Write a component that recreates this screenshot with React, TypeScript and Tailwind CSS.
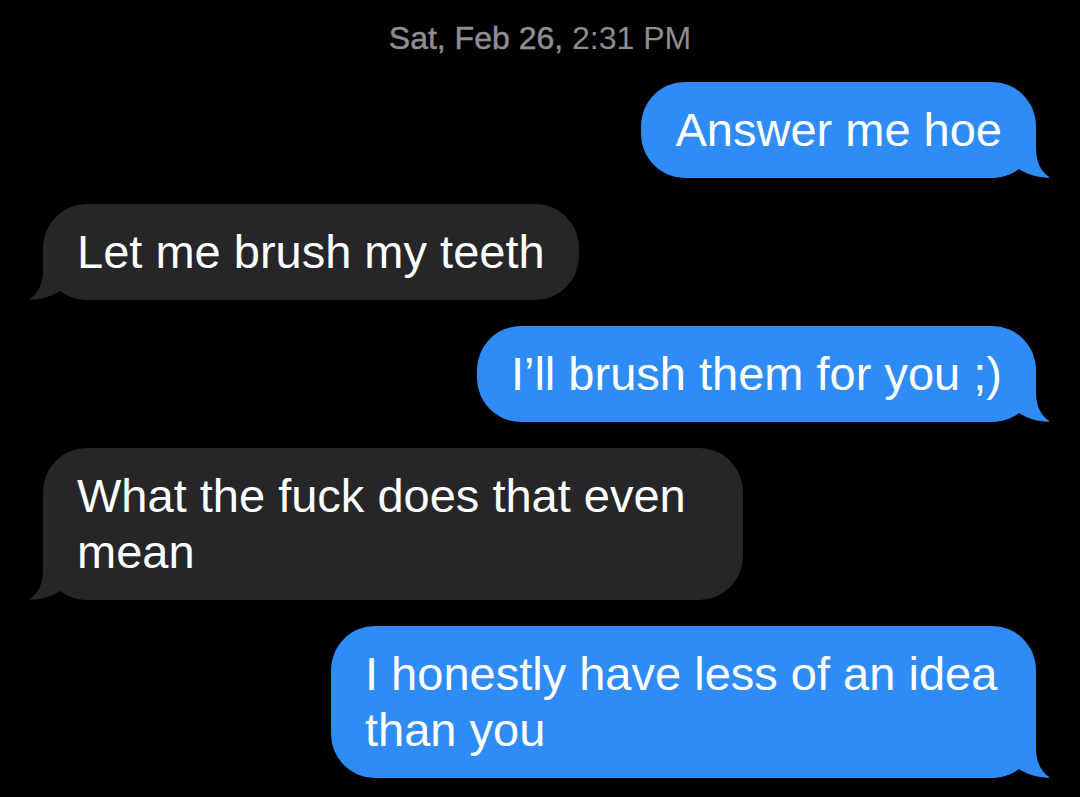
import React from 'react';

type Side = 'left' | 'right';

type Message = {
  side: Side;
  lines: string[];
  width?: string;
};

const messages: Message[] = [
  { side: 'right', lines: ['Answer me hoe'] },
  { side: 'left', lines: ['Let me brush my teeth'] },
  { side: 'right', lines: ['I\u2019ll brush them for you ;)'] },
  { side: 'left', lines: ['What the fuck does that even', 'mean'], width: 'w-[700px]' },
  { side: 'right', lines: ['I honestly have less of an idea', 'than you'], width: 'w-[705px]' },
];

function Tail({ side, color }: { side: Side; color: string }) {
  return (
    <svg
      width="64"
      height="48"
      viewBox="0 0 64 48"
      className={
        side === 'right'
          ? 'absolute bottom-0 right-[-16px]'
          : 'absolute bottom-0 left-[-16px] -scale-x-100'
      }
    >
      <path
        d="M0 0 L48 0 L48 18 C48 32 53 42 62 47.6 C52 48 40 45 31 39 C23 45 12 48 0 48 Z"
        fill={color}
      />
    </svg>
  );
}

function Bubble({ message }: { message: Message }) {
  const isMe = message.side === 'right';
  const color = isMe ? '#2f8cf6' : '#262629';

  return (
    <div className={isMe ? 'flex justify-end' : 'flex justify-start'}>
      <div
        className={`relative rounded-[44px] px-[34px] py-5 text-[47px] leading-[56px] text-white ${
          isMe ? 'bg-[#2f8cf6]' : 'bg-[#262629]'
        } ${message.width ?? ''}`}
      >
        <Tail side={message.side} color={color} />
        <p className="relative whitespace-nowrap">
          {message.lines.map((line, i) => (
            <React.Fragment key={i}>
              {i > 0 && <br />}
              {line}
            </React.Fragment>
          ))}
        </p>
      </div>
    </div>
  );
}

export default function App() {
  return (
    <div
      className="min-h-[797px] w-full bg-black"
      style={{ fontFamily: '"Liberation Sans", Arial, sans-serif' }}
    >
      <div className="pt-5 text-center text-[32px] leading-[36px] text-[#8e8e93]">
        <span className="[-webkit-text-stroke:0.5px_#8e8e93]">Sat, Feb 26,</span>{' '}
        <span>2:31 PM</span>
      </div>

      <div className="mt-[26px] flex flex-col gap-[26px] pl-[43px] pr-[44px]">
        {messages.map((m, i) => (
          <Bubble key={i} message={m} />
        ))}
      </div>
    </div>
  );
}
